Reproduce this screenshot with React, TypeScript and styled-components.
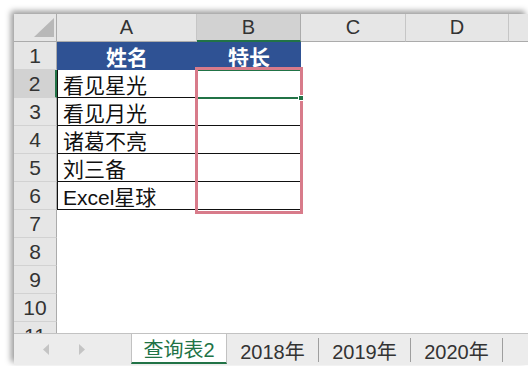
import React from 'react';
import styled, { createGlobalStyle, css } from 'styled-components';

const GlobalStyle = createGlobalStyle`
  html, body { margin: 0; padding: 0; background: #fff; overflow: hidden; }
  body { font-family: "Liberation Sans", "Noto Sans CJK SC", sans-serif; }
  * { box-sizing: border-box; }
`;

const Page = styled.div`
  width: 528px;
  height: 366px;
  padding: 14px 0 0 14px;
  overflow: hidden;
`;

const Window = styled.div`
  width: 514px;
  height: 351px;
  display: flex;
  flex-direction: column;
  background: #fff;
  box-shadow: -3px -3px 6px rgba(0, 0, 0, 0.4);
`;

const SheetArea = styled.div`
  position: relative;
  height: 319px;
  overflow: hidden;
  flex: none;
`;

const Grid = styled.div`
  display: grid;
  grid-template-columns: 43px 140px 104px 105px 103px 105px;
  grid-auto-rows: 28px;
`;

const Corner = styled.div`
  background: #e6e6e6;
  border-right: 1px solid #ababab;
  border-bottom: 1px solid #ababab;
  display: flex;
  justify-content: flex-end;
  align-items: flex-end;
  padding: 0 2px 4px 0;
`;

const ColHeader = styled.div<{ $selected?: boolean }>`
  background: #e6e6e6;
  border-right: 1px solid #c6c6c6;
  border-bottom: 1px solid #ababab;
  display: flex;
  align-items: center;
  justify-content: center;
  font-size: 20px;
  color: #333;
  ${(p) =>
    p.$selected &&
    css`
      background: #d2d2d2;
      border-bottom: 2px solid #217346;
      border-right-color: #ababab;
    `}
`;

const RowHeader = styled.div<{ $selected?: boolean }>`
  background: #e6e6e6;
  border-right: 1px solid #ababab;
  border-bottom: 1px solid #d2d2d2;
  display: flex;
  align-items: center;
  justify-content: center;
  font-size: 21px;
  color: #333;
  padding-top: 1px;
  ${(p) =>
    p.$selected &&
    css`
      background: #d2d2d2;
      border-right: 2px solid #217346;
    `}
`;

const Cell = styled.div<{ $title?: boolean; $boxed?: boolean; $first?: boolean }>`
  display: flex;
  align-items: center;
  padding-left: 5px;
  font-size: 21px;
  color: #111;
  white-space: nowrap;
  font-family: "Liberation Sans", "Noto Sans CJK SC", sans-serif;
  ${(p) =>
    p.$boxed &&
    css`
      border-bottom: 1px solid #111;
    `}
  ${(p) =>
    p.$first &&
    p.$boxed &&
    css`
      border-left: 1px solid #111;
    `}
  ${(p) =>
    p.$title &&
    css`
      background: #2f5294;
      color: #fff;
      font-weight: bold;
      justify-content: center;
      padding-left: 0;
    `}
`;

const Selection = styled.div`
  position: absolute;
  left: 182px;
  top: 55px;
  width: 106px;
  height: 30px;
  border: 2px solid #217346;
`;

const FillHandle = styled.div`
  position: absolute;
  left: 284px;
  top: 81px;
  width: 6px;
  height: 6px;
  background: #217346;
  border: 1px solid #fff;
`;

const Highlight = styled.div`
  position: absolute;
  left: 181px;
  top: 53px;
  width: 108px;
  height: 147px;
  border: 3px solid #d87b8a;
`;

const TabBar = styled.div`
  flex: 1;
  display: flex;
  align-items: flex-start;
  background: #ececec;
  border-top: 1px solid #c2c2c2;
`;

const NavArrows = styled.div`
  width: 117px;
  height: 30px;
  display: flex;
  align-items: center;
  gap: 30px;
  padding-left: 29px;
`;

const Arrow = styled.svg`
  display: block;
`;

const Tab = styled.div<{ $active?: boolean }>`
  height: 24px;
  margin-top: 4px;
  width: 92px;
  display: flex;
  align-items: center;
  justify-content: center;
  font-size: 20px;
  color: #333;
  border-right: 1px solid #9e9e9e;
  font-family: "Liberation Sans", "Noto Sans CJK SC", sans-serif;
  ${(p) =>
    p.$active &&
    css`
      height: 30px;
      margin-top: 0;
      width: 96px;
      background: #fff;
      color: #217346;
      border-left: 1px solid #c2c2c2;
      border-right: 1px solid #c2c2c2;
      border-bottom: 2px solid #217346;
    `}
`;

const columns = ['A', 'B', 'C', 'D', ''];
const data: string[][] = [
  ['姓名', '特长'],
  ['看见星光', ''],
  ['看见月光', ''],
  ['诸葛不亮', ''],
  ['刘三备', ''],
  ['Excel星球', ''],
];

export default function App() {
  const rows = Array.from({ length: 11 }, (_, i) => i + 1);
  return (
    <Page>
      <GlobalStyle />
      <Window>
        <SheetArea>
          <Grid>
            <Corner>
              <svg width="20" height="19" viewBox="0 0 20 19">
                <polygon points="0,19 20,19 20,0" fill="#b8b8b8" />
              </svg>
            </Corner>
            {columns.map((c, ci) => (
              <ColHeader key={ci} $selected={c === 'B'}>
                {c}
              </ColHeader>
            ))}
            {rows.map((r) => {
              const rowData = data[r - 1];
              return (
                <React.Fragment key={r}>
                  <RowHeader $selected={r === 2}>{r}</RowHeader>
                  {columns.map((_, ci) => {
                    const inTable = !!rowData && ci < 2;
                    return (
                      <Cell
                        key={ci}
                        $title={r === 1 && ci < 2}
                        $boxed={inTable && r > 1}
                        $first={ci === 0}
                      >
                        {inTable ? rowData[ci] : ''}
                      </Cell>
                    );
                  })}
                </React.Fragment>
              );
            })}
          </Grid>
          <Selection />
          <Highlight />
          <FillHandle />
        </SheetArea>
        <TabBar>
          <NavArrows>
            <Arrow width="6" height="11" viewBox="0 0 6 11">
              <polygon points="6,0 6,11 0,5.5" fill="#c4c4c4" />
            </Arrow>
            <Arrow width="6" height="11" viewBox="0 0 6 11">
              <polygon points="0,0 0,11 6,5.5" fill="#c4c4c4" />
            </Arrow>
          </NavArrows>
          <Tab $active>查询表2</Tab>
          <Tab>2018年</Tab>
          <Tab>2019年</Tab>
          <Tab>2020年</Tab>
        </TabBar>
      </Window>
    </Page>
  );
}
